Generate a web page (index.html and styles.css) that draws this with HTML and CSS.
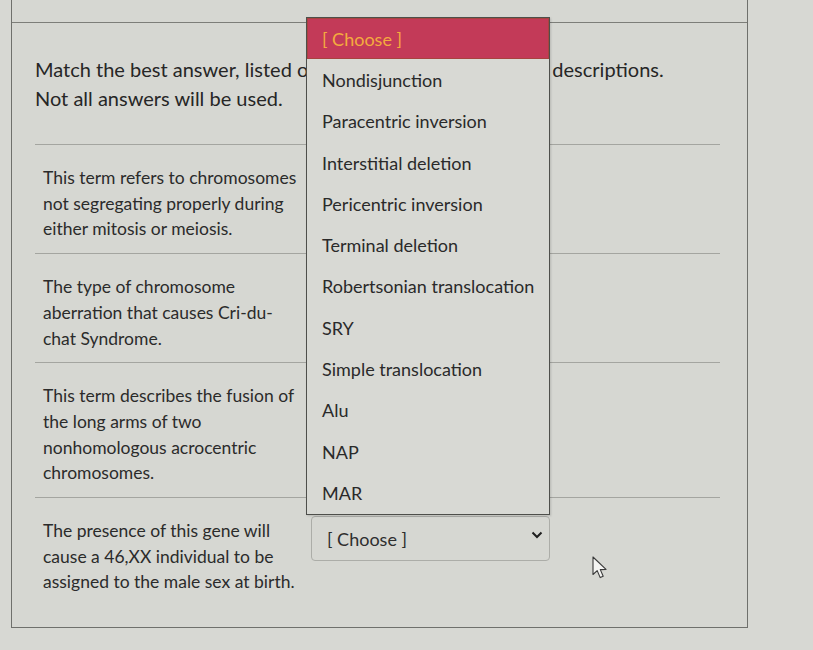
FILE: index.html
```html
<!DOCTYPE html>
<html lang="en">
<head>
<meta charset="utf-8">
<title>Matching question</title>
<link rel="stylesheet" href="styles.css">
</head>
<body>
<div class="page">
  <section class="quiz">
    <header class="quiz-head"></header>
    <p class="prompt">Match the best answer, listed on the right, to the following descriptions.<br>Not all answers will be used.</p>
    <div class="pairs">
      <div class="pair">
        <p class="desc">This term refers to chromosomes not segregating properly during either mitosis or meiosis.</p>
        <div class="select"><span>[ Choose ]</span><svg class="chev" viewBox="0 0 12 8" width="12" height="8"><path d="M1.5 1.5 L6 6 L10.5 1.5" /></svg></div>
      </div>
      <div class="pair">
        <p class="desc">The type of chromosome aberration that causes Cri-du-chat Syndrome.</p>
        <div class="select"><span>[ Choose ]</span><svg class="chev" viewBox="0 0 12 8" width="12" height="8"><path d="M1.5 1.5 L6 6 L10.5 1.5" /></svg></div>
      </div>
      <div class="pair">
        <p class="desc">This term describes the fusion of the long arms of two nonhomologous acrocentric chromosomes.</p>
        <div class="select"><span>[ Choose ]</span><svg class="chev" viewBox="0 0 12 8" width="12" height="8"><path d="M1.5 1.5 L6 6 L10.5 1.5" /></svg></div>
      </div>
      <div class="pair">
        <p class="desc">The presence of this gene will cause a 46,XX individual to be assigned to the male sex at birth.</p>
        <div class="select"><span>[ Choose ]</span><svg class="chev" viewBox="0 0 12 8" width="12" height="8"><path d="M1.5 1.5 L6 6 L10.5 1.5" /></svg></div>
      </div>
    </div>
  </section>

  <!-- open option list of the last select -->
  <ul class="menu">
    <li class="opt active">[ Choose ]</li>
    <li class="opt">Nondisjunction</li>
    <li class="opt">Paracentric inversion</li>
    <li class="opt">Interstitial deletion</li>
    <li class="opt">Pericentric inversion</li>
    <li class="opt">Terminal deletion</li>
    <li class="opt">Robertsonian translocation</li>
    <li class="opt">SRY</li>
    <li class="opt">Simple translocation</li>
    <li class="opt">Alu</li>
    <li class="opt">NAP</li>
    <li class="opt">MAR</li>
  </ul>

  <svg class="cursor" viewBox="0 0 16 24" width="16" height="24">
    <path d="M1 1 L1 18.5 L5.2 14.6 L8.2 21.6 L11.2 20.3 L8.3 13.6 L14 13.4 Z" />
  </svg>
</div>
</body>
</html>
```

FILE: styles.css
```css
html, body {
  margin: 0;
  padding: 0;
}

body {
  background: #d7d8d3;
  font-family: Lato, "Open Sans", sans-serif;
  color: #2a2a2a;
}

.page {
  position: relative;
  width: 813px;
  height: 650px;
  overflow: hidden;
}

/* question panel */
.quiz {
  box-sizing: border-box;
  margin-left: 11px;
  width: 737px;
  height: 628px;
  border-left: 1px solid #6f706c;
  border-right: 1px solid #6f706c;
  border-bottom: 1px solid #6f706c;
  background: #d6d7d2;
}

.quiz-head {
  height: 22px;
  border-bottom: 1px solid #7d7e79;
}

.prompt {
  margin: 32px 0 31px 23px;
  font-size: 20px;
  line-height: 29px;
  color: #262626;
}

.pairs {
  margin-left: 23px;
  width: 685px;
}

.pair {
  display: grid;
  grid-template-columns: 268px 239px;
  align-items: start;
  border-top: 1px solid #a4a5a0;
  padding: 20px 0 11px 8px;
}

.desc {
  margin: 0;
  width: 262px;
  font-size: 17.5px;
  line-height: 25.7px;
  color: #2b2b2b;
}

.select {
  box-sizing: border-box;
  height: 45px;
  margin-top: -2px;
  display: flex;
  align-items: center;
  justify-content: space-between;
  padding: 0 6px 0 15px;
  border: 1px solid #acada8;
  border-radius: 4px;
  font-size: 18px;
  color: #2e2e2e;
}

.chev {
  margin-top: -8px;
}

.chev path {
  fill: none;
  stroke: #1f1f1f;
  stroke-width: 2;
}

/* dropdown option list */
.menu {
  position: absolute;
  left: 306px;
  top: 17px;
  width: 244px;
  box-sizing: border-box;
  margin: 0;
  padding: 0;
  list-style: none;
  background: #d8d9d4;
  border: 1px solid #4e4f4b;
  box-shadow: 1px 1px 2px rgba(0, 0, 0, 0.15);
}

.opt {
  height: 41.3px;
  display: flex;
  align-items: center;
  padding-left: 15px;
  font-size: 18px;
  color: #2a2a2a;
}

.opt.active {
  background: #c33a58;
  color: #f4ab3e;
  box-shadow: inset 0 0 0 1px #a8433f;
}

.cursor {
  position: absolute;
  left: 592px;
  top: 556px;
}

.cursor path {
  fill: #f4f4f2;
  stroke: #3a3a3a;
  stroke-width: 1.1;
  stroke-linejoin: round;
}
```
